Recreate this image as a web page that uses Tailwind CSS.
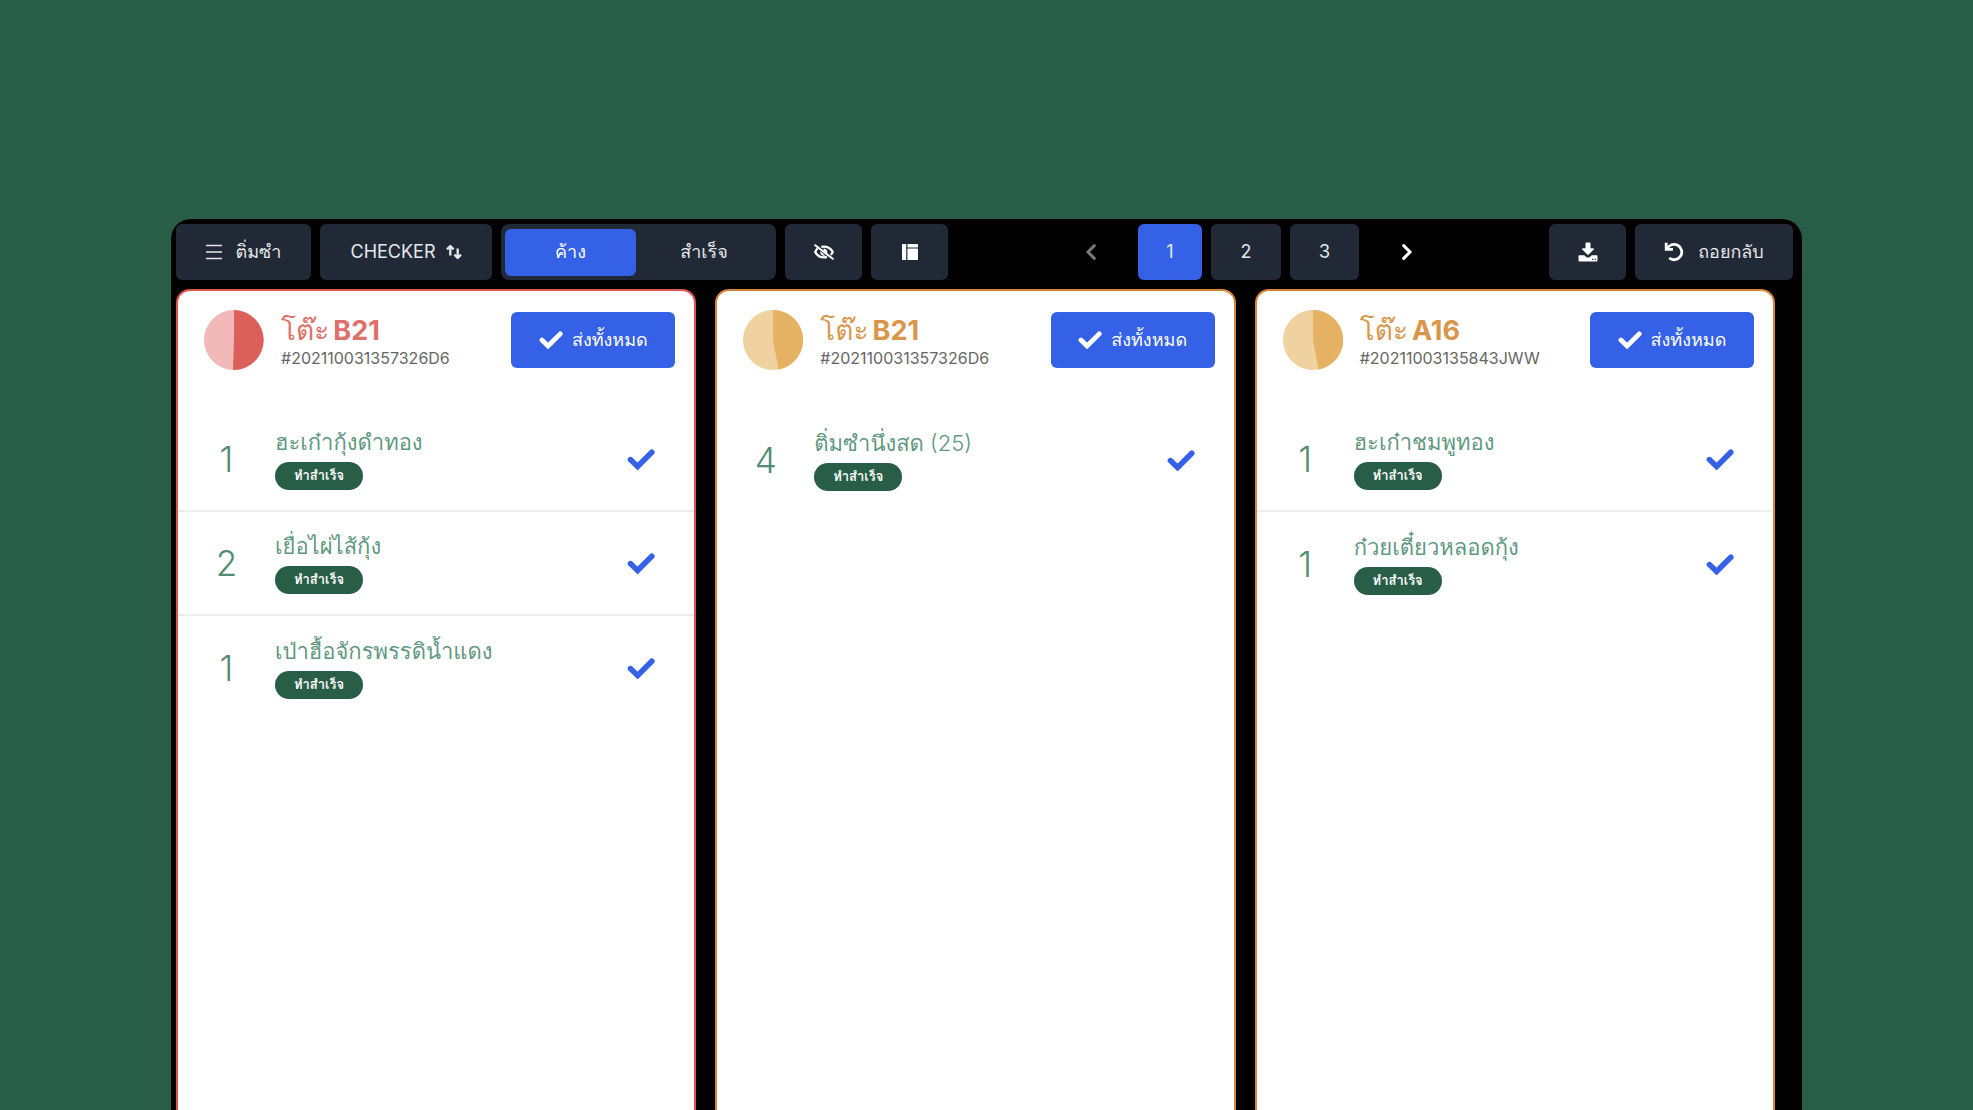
<!DOCTYPE html>
<html lang="th">
<head>
  <meta charset="UTF-8" />
  <meta name="viewport" content="width=device-width, initial-scale=1.0" />
  <title>Checker - ติ่มซำ</title>
  <script src="https://cdn.jsdelivr.net/npm/@tailwindcss/browser@4"></script>
</head>
<body class="bg-[#285e47] h-screen overflow-hidden flex flex-col px-[171px] pt-[219px] font-['Inter','Loma',sans-serif]">

  <!-- icons -->
  <svg class="hidden">
    <symbol id="check" viewBox="0 0 28 21"><path d="M3.400 10.600l7.200 6.900L24.800 3.300" fill="none" stroke="currentColor" stroke-width="5.600" stroke-linejoin="miter" stroke-linecap="round" /></symbol>
    <symbol id="pie-red" viewBox="0 0 60 60"><circle cx="30" cy="30" r="30" fill="#f2b9b9" /><path d="M30 30V0a30 30 0 1 1-1 60z" fill="#db5f5b" /></symbol>
    <symbol id="pie-orange" viewBox="0 0 60 60"><circle cx="30" cy="30" r="30" fill="#f0d2a0" /><path d="M30 30V0a30 30 0 0 1 5.600 59.500z" fill="#e5b263" /></symbol>
  </svg>

  <div class="flex-1 min-h-0 flex flex-col bg-black rounded-t-[20px] pt-[5px] pl-[5px]">

    <!-- toolbar -->
    <div class="flex justify-between pr-[9px] text-lg leading-6 text-gray-200">
      <div class="flex gap-[9px]">
        <button class="h-14 w-[135px] flex items-center justify-center gap-[14px] bg-[#212936] rounded-md">
          <svg class="w-4 h-4" viewBox="0 0 16 16" fill="none" stroke="currentColor" stroke-width="1.500"><path d="M0 1.500h16M0 8h16M0 14.500h16" /></svg>
          ติ่มซำ
        </button>
        <button class="h-14 w-[172px] flex items-center justify-center gap-[10px] bg-[#212936] rounded-md">
          CHECKER
          <svg class="w-4 h-4" viewBox="0 0 16 16" fill="none" stroke="currentColor" stroke-width="2.300" stroke-linejoin="round"><path d="M4.300 11.500V3M1 5.400L4.300 2l3.300 3.400M11.700 4.500V13M8.400 10.600l3.300 3.400 3.300-3.400" /></svg>
        </button>
        <div class="h-14 p-1 flex items-center bg-[#212936] rounded-lg">
          <button class="h-[47px] w-[131px] bg-[#3461e5] text-white rounded-md">ค้าง</button>
          <button class="h-[47px] w-[136px]">สำเร็จ</button>
        </div>
        <button aria-label="ซ่อน" class="h-14 w-[77px] flex items-center justify-center bg-[#212936] rounded-md text-white">
          <svg class="w-5 h-4" viewBox="0 0 20 16" fill="none" stroke="currentColor"><path d="M3.600 4.300C2.500 5.400 1.800 6.700 1.200 8c1.700 3.300 4.900 5.400 8.800 5.400 1 0 2-.2 2.900-.5M7.300 2.900c.9-.2 1.800-.3 2.700-.3 3.800 0 7 2.200 8.800 5.400-.5 1.100-1.200 2-2.100 2.800" stroke-width="2.200" /><path d="M9.600 4.500a3.600 3.600 0 0 1 3.500 5.100L9.600 7z" fill="currentColor" stroke="none" /><path d="M6.400 7.200a3.600 3.600 0 0 0 4.800 4.200z" fill="currentColor" stroke="none" /><path d="M1.200 1.200l17.600 13.600" stroke-width="2" stroke-linecap="round" /></svg>
        </button>
        <button aria-label="เลย์เอาต์" class="h-14 w-[77px] flex items-center justify-center bg-[#212936] rounded-md text-white">
          <svg class="w-4 h-4" viewBox="0 0 16 16" fill="currentColor"><rect x="0" y="0" width="4.200" height="16" rx=".6" /><rect x="5.400" y="0" width="10.600" height="3.400" rx=".6" /><rect x="5.400" y="4.500" width="10.600" height="11.500" rx=".6" /></svg>
        </button>
      </div>

      <div class="flex gap-[9px]">
        <button aria-label="ก่อนหน้า" class="h-14 w-[77px] flex items-center justify-center text-[#777]">
          <svg class="w-3 h-4" viewBox="0 0 12 16" fill="none" stroke="currentColor" stroke-width="3" stroke-linecap="round" stroke-linejoin="miter"><path d="M9.300 1.600L3 8l6.300 6.400" /></svg>
        </button>
        <button class="h-14 w-16 bg-[#3461e5] rounded-md">1</button>
        <button class="h-14 w-[70px] bg-[#212936] rounded-md">2</button>
        <button class="h-14 w-[69px] bg-[#212936] rounded-md">3</button>
        <button aria-label="ถัดไป" class="h-14 w-[77px] flex items-center justify-center text-white">
          <svg class="w-3 h-4" viewBox="0 0 12 16" fill="none" stroke="currentColor" stroke-width="3" stroke-linecap="round" stroke-linejoin="miter"><path d="M2.700 1.600L9 8l-6.300 6.400" /></svg>
        </button>
      </div>

      <div class="flex gap-[9px]">
        <button aria-label="ดาวน์โหลด" class="h-14 w-[77px] flex items-center justify-center bg-[#212936] rounded-md text-white">
          <svg class="w-5 h-5" viewBox="0 0 20 20" fill="currentColor"><path d="M8.200.500h3.600c.4 0 .7.300.7.700v5h2.700c.7 0 1 .8.500 1.300l-5 5c-.4.400-1 .400-1.400 0l-5-5c-.5-.5-.2-1.300.5-1.300h2.700v-5c0-.4.300-.7.700-.7z" /><path d="M1.400 13.200h4.900l1.900 1.700c1 .9 2.600.9 3.600 0l1.900-1.700h4.900c.5 0 .9.400.9.900v4.500c0 .5-.4.900-.9.900H1.400c-.5 0-.9-.4-.9-.9v-4.500c0-.5.400-.9.900-.9zm12.700 3.600v1.300h1.300v-1.300zm2.600 0v1.300H18v-1.300z" fill-rule="evenodd" /></svg>
        </button>
        <button class="h-14 w-[158px] flex items-center justify-center gap-[14px] bg-[#212936] rounded-md">
          <svg class="w-5 h-5 text-white" viewBox="0 0 20 20" fill="none" stroke="currentColor" stroke-width="2.800"><path d="M2.200.800v6.600H9" /><path d="M3 7a7.700 7.700 0 1 1 2.200 9" /></svg>
          ถอยกลับ
        </button>
      </div>
    </div>

    <!-- orders -->
    <div class="flex-1 flex gap-[19px] pt-[9px] pr-[27px]">

      <section class="flex-1 bg-white border-2 border-b-0 border-[#e0564f] rounded-t-[14px]">
        <div class="flex items-center pt-[19px] pl-[26px] pr-[19px]">
          <svg class="w-[60px] h-[60px]"><use href="#pie-red" /></svg>
          <div class="flex-1 pl-[17px]">
            <h2 class="flex items-baseline gap-1 text-[27px] leading-[34px] text-[#e0706b]"><span class="text-[28px] leading-[34px]">โต๊ะ</span><b>B21</b></h2>
            <p class="text-base leading-5 text-[#666]">#202110031357326D6</p>
          </div>
          <button class="h-14 w-[164px] flex items-center justify-center gap-[9px] bg-[#3461e5] text-white text-lg rounded-md"><svg class="w-6 h-[18px]"><use href="#check" /></svg>ส่งทั้งหมด</button>
        </div>
        <ul class="mt-[38px] divide-y-2 divide-[#eeeeee] text-[#528c73]">
          <li class="h-[104px] flex items-center pr-[39px]">
            <span class="w-[97px] text-center text-[35px] font-light">1</span>
            <div class="flex-1">
              <h3 class="text-[22px] leading-7 font-light text-[#609881]">ฮะเก๋ากุ้งดำทอง</h3>
              <span class="mt-[6px] w-[88px] h-7 flex items-center justify-center rounded-full bg-[#285e47] text-white text-[13px] font-bold">ทำสำเร็จ</span>
            </div>
            <button aria-label="เสร็จ" class="text-[#3461e5]"><svg class="w-7 h-[21px]"><use href="#check" /></svg></button>
          </li>
          <li class="h-[104px] flex items-center pr-[39px]">
            <span class="w-[97px] text-center text-[35px] font-light">2</span>
            <div class="flex-1">
              <h3 class="text-[22px] leading-7 font-light text-[#609881]">เยื่อไผ่ไส้กุ้ง</h3>
              <span class="mt-[6px] w-[88px] h-7 flex items-center justify-center rounded-full bg-[#285e47] text-white text-[13px] font-bold">ทำสำเร็จ</span>
            </div>
            <button aria-label="เสร็จ" class="text-[#3461e5]"><svg class="w-7 h-[21px]"><use href="#check" /></svg></button>
          </li>
          <li class="h-[104px] flex items-center pr-[39px]">
            <span class="w-[97px] text-center text-[35px] font-light">1</span>
            <div class="flex-1">
              <h3 class="text-[22px] leading-7 font-light text-[#609881]">เป่าฮื้อจักรพรรดิน้ำแดง</h3>
              <span class="mt-[6px] w-[88px] h-7 flex items-center justify-center rounded-full bg-[#285e47] text-white text-[13px] font-bold">ทำสำเร็จ</span>
            </div>
            <button aria-label="เสร็จ" class="text-[#3461e5]"><svg class="w-7 h-[21px]"><use href="#check" /></svg></button>
          </li>
        </ul>
      </section>

      <section class="flex-1 bg-white border-2 border-b-0 border-[#d98336] rounded-t-[14px]">
        <div class="flex items-center pt-[19px] pl-[26px] pr-[19px]">
          <svg class="w-[60px] h-[60px]"><use href="#pie-orange" /></svg>
          <div class="flex-1 pl-[17px]">
            <h2 class="flex items-baseline gap-1 text-[27px] leading-[34px] text-[#d9964a]"><span class="text-[28px] leading-[34px]">โต๊ะ</span><b>B21</b></h2>
            <p class="text-base leading-5 text-[#666]">#202110031357326D6</p>
          </div>
          <button class="h-14 w-[164px] flex items-center justify-center gap-[9px] bg-[#3461e5] text-white text-lg rounded-md"><svg class="w-6 h-[18px]"><use href="#check" /></svg>ส่งทั้งหมด</button>
        </div>
        <ul class="mt-[38px] divide-y-2 divide-[#eeeeee] text-[#528c73]">
          <li class="h-[104px] flex items-center pr-[39px]">
            <span class="w-[97px] text-center text-[35px] font-light">4</span>
            <div class="flex-1">
              <h3 class="text-[22px] leading-7 font-light text-[#609881]">ติ่มซำนึ่งสด (25)</h3>
              <span class="mt-[6px] w-[88px] h-7 flex items-center justify-center rounded-full bg-[#285e47] text-white text-[13px] font-bold">ทำสำเร็จ</span>
            </div>
            <button aria-label="เสร็จ" class="text-[#3461e5]"><svg class="w-7 h-[21px]"><use href="#check" /></svg></button>
          </li>
        </ul>
      </section>

      <section class="flex-1 bg-white border-2 border-b-0 border-[#d98336] rounded-t-[14px]">
        <div class="flex items-center pt-[19px] pl-[26px] pr-[19px]">
          <svg class="w-[60px] h-[60px]"><use href="#pie-orange" /></svg>
          <div class="flex-1 pl-[17px]">
            <h2 class="flex items-baseline gap-1 text-[27px] leading-[34px] text-[#d9964a]"><span class="text-[28px] leading-[34px]">โต๊ะ</span><b>A16</b></h2>
            <p class="text-base leading-5 text-[#666]">#20211003135843JWW</p>
          </div>
          <button class="h-14 w-[164px] flex items-center justify-center gap-[9px] bg-[#3461e5] text-white text-lg rounded-md"><svg class="w-6 h-[18px]"><use href="#check" /></svg>ส่งทั้งหมด</button>
        </div>
        <ul class="mt-[38px] divide-y-2 divide-[#eeeeee] text-[#528c73]">
          <li class="h-[104px] flex items-center pr-[39px]">
            <span class="w-[97px] text-center text-[35px] font-light">1</span>
            <div class="flex-1">
              <h3 class="text-[22px] leading-7 font-light text-[#609881]">ฮะเก๋าชมพูทอง</h3>
              <span class="mt-[6px] w-[88px] h-7 flex items-center justify-center rounded-full bg-[#285e47] text-white text-[13px] font-bold">ทำสำเร็จ</span>
            </div>
            <button aria-label="เสร็จ" class="text-[#3461e5]"><svg class="w-7 h-[21px]"><use href="#check" /></svg></button>
          </li>
          <li class="h-[104px] flex items-center pr-[39px]">
            <span class="w-[97px] text-center text-[35px] font-light">1</span>
            <div class="flex-1">
              <h3 class="text-[22px] leading-7 font-light text-[#609881]">ก๋วยเตี๋ยวหลอดกุ้ง</h3>
              <span class="mt-[6px] w-[88px] h-7 flex items-center justify-center rounded-full bg-[#285e47] text-white text-[13px] font-bold">ทำสำเร็จ</span>
            </div>
            <button aria-label="เสร็จ" class="text-[#3461e5]"><svg class="w-7 h-[21px]"><use href="#check" /></svg></button>
          </li>
        </ul>
      </section>

    </div>
  </div>

</body>
</html>
